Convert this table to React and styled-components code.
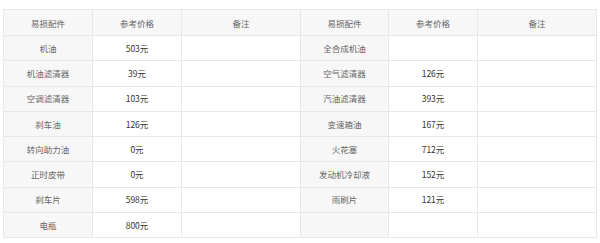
import React from 'react'
import styled, { createGlobalStyle } from 'styled-components'

const GlobalStyle = createGlobalStyle`
  html, body {
    margin: 0;
    padding: 0;
    background: #fff;
  }
  body {
    font-family: "Noto Sans CJK SC", "Liberation Sans", sans-serif;
  }
`

const Wrapper = styled.div`
  padding: 9px 4px 0 3px;
`

const Table = styled.table`
  width: 593px;
  border-collapse: collapse;
  table-layout: fixed;
  font-size: 8.5px;
`

const HeadCell = styled.th`
  height: 25px;
  padding: 0;
  border: 1px solid #e8e8e8;
  background: #f7f7f7;
  color: #666;
  font-weight: normal;
  text-align: center;
`

const Cell = styled.td`
  height: 24.25px;
  padding: 0;
  border: 1px solid #e8e8e8;
  background: ${(p) => (p.$label ? '#f7f7f7' : '#fff')};
  color: ${(p) => (p.$label ? '#666' : '#333')};
  text-align: center;
  line-height: 1;
`

const rows = [
  ['机油', '503元', '全合成机油', ''],
  ['机油滤清器', '39元', '空气滤清器', '126元'],
  ['空调滤清器', '103元', '汽油滤清器', '393元'],
  ['刹车油', '126元', '变速箱油', '167元'],
  ['转向助力油', '0元', '火花塞', '712元'],
  ['正时皮带', '0元', '发动机冷却液', '152元'],
  ['刹车片', '598元', '雨刷片', '121元'],
  ['电瓶', '800元', '', ''],
]

const widths = [89, 89, 119, 88, 89, 119]
const heads = ['易损配件', '参考价格', '备注', '易损配件', '参考价格', '备注']

const App = () => (
  <Wrapper>
    <GlobalStyle />
    <Table>
      <colgroup>
        {widths.map((w, i) => (
          <col key={i} style={{ width: w }} />
        ))}
      </colgroup>
      <thead>
        <tr>
          {heads.map((h, i) => (
            <HeadCell key={i}>{h}</HeadCell>
          ))}
        </tr>
      </thead>
      <tbody>
        {rows.map((r, i) => (
          <tr key={i}>
            <Cell $label>{r[0]}</Cell>
            <Cell>{r[1]}</Cell>
            <Cell />
            <Cell $label>{r[2]}</Cell>
            <Cell>{r[3]}</Cell>
            <Cell />
          </tr>
        ))}
      </tbody>
    </Table>
  </Wrapper>
)

export default App
